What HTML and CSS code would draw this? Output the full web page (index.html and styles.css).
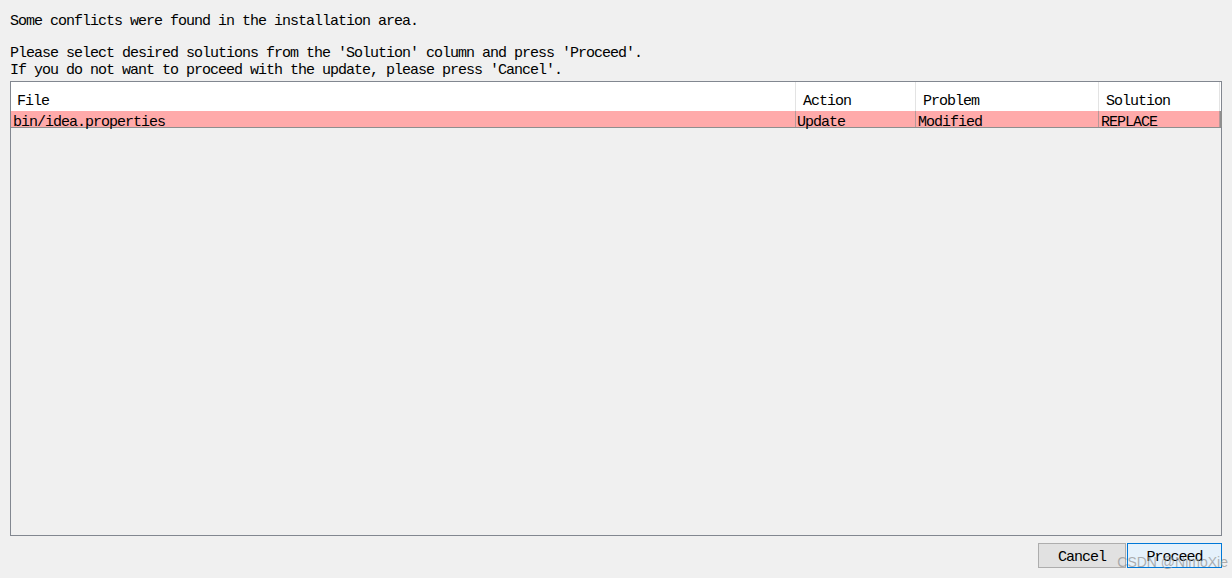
FILE: index.html
```html
<!DOCTYPE html>
<html>
<head>
<meta charset="utf-8">
<link rel="stylesheet" href="styles.css">
</head>
<body>
<div class="dialog">
  <p class="msg first">Some conflicts were found in the installation area.</p>
  <p class="msg gap">Please select desired solutions from the 'Solution' column and press 'Proceed'.</p>
  <p class="msg">If you do not want to proceed with the update, please press 'Cancel'.</p>
  <div class="table">
    <div class="head">
      <div class="hcell">File</div>
      <div class="hcell">Action</div>
      <div class="hcell">Problem</div>
      <div class="hcell">Solution</div>
      <div class="hcell end"></div>
    </div>
    <div class="row">
      <div class="cell">bin/idea.properties</div>
      <div class="cell tight">Update</div>
      <div class="cell">Modified</div>
      <div class="cell">REPLACE</div>
      <div class="cell end"></div>
    </div>
  </div>
  <div class="buttons">
    <button class="btn cancel">Cancel</button>
    <button class="btn proceed">Proceed</button>
  </div>
  <div class="watermark">CSDN @NimoXie</div>
</div>
</body>
</html>
```

FILE: styles.css
```css
* { box-sizing: border-box; }
html, body { margin: 0; padding: 0; }
body {
  background: #f0f0f0;
  font-family: "Liberation Mono", "Noto Sans CJK SC", monospace;
  font-size: 15px;
  letter-spacing: -1px;
  color: #000;
}
.dialog {
  position: relative;
  height: 578px;
  display: flex;
  flex-direction: column;
  padding: 12px 10px 10px 10px;
}
.msg {
  margin: 0;
  line-height: 17px;
  height: 17px;
  white-space: pre;
}
.msg.first { padding-top: 1px; }
.msg.gap { margin-top: 16px; }
.table {
  margin-top: 2px;
  flex: 1;
  border: 1px solid #828790;
  background: #f0f0f0;
  display: flex;
  flex-direction: column;
}
.head, .row {
  display: grid;
  grid-template-columns: 785px 120px 183px 121px 1fr;
}
.head {
  height: 29px;
  background: #fff;
}
.hcell {
  border-right: 1px solid #e3e3e3;
  padding: 11px 0 0 6px;
  line-height: 17px;
  white-space: nowrap;
}
.hcell:nth-child(n+2) { padding-left: 7px; }
.hcell.end { border-right: none; }
.row {
  height: 17px;
  background: #ffaaaa;
  border-bottom: 1px solid #8e8e8e;
}
.cell {
  border-right: 1px solid #b89898;
  padding: 3px 0 0 2px;
  line-height: 17px;
  height: 16px;
  white-space: nowrap;
}
.cell.tight { padding-left: 1px; }
.cell.end { border-right: none; background: #8e8e8e; }
.buttons {
  margin-top: 7px;
  display: flex;
  justify-content: flex-end;
  gap: 1px;
}
.btn {
  height: 25px;
  font-family: inherit;
  font-size: 15px;
  letter-spacing: -1px;
  color: #000;
  padding: 3px 0 0 0;
  line-height: 22px;
}
.cancel {
  width: 88px;
  background: #e1e1e1;
  border: 1px solid #adadad;
}
.proceed {
  width: 95px;
  background: #e5f1fb;
  border: 1px solid #0078d7;
}
.watermark {
  position: absolute;
  right: 4px;
  bottom: 9px;
  font-family: "Liberation Sans", Arial, sans-serif;
  font-size: 14px;
  letter-spacing: 0;
  color: rgba(150, 150, 150, 0.75);
  line-height: 14px;
}
```
